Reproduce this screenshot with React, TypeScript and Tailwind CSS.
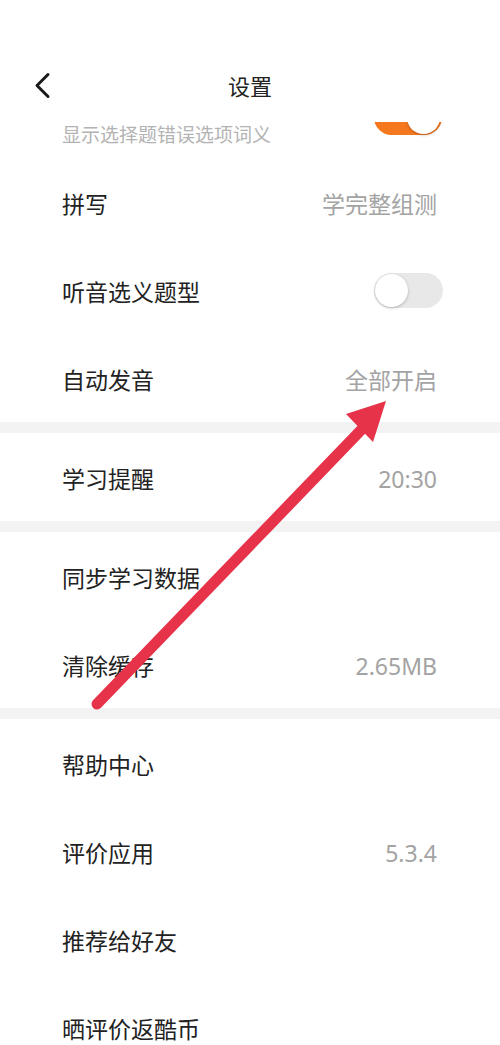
import React from "react";

const font = { fontFamily: '"Noto Sans", "Noto Sans CJK SC", sans-serif' };

type Row = { label: string; value?: string; toggle?: boolean };

const sections: Row[][] = [
  [
    { label: "拼写", value: "学完整组测" },
    { label: "听音选义题型", toggle: false },
    { label: "自动发音", value: "全部开启" },
  ],
  [{ label: "学习提醒", value: "20:30" }],
  [
    { label: "同步学习数据" },
    { label: "清除缓存", value: "2.65MB" },
  ],
  [
    { label: "帮助中心" },
    { label: "评价应用", value: "5.3.4" },
    { label: "推荐给好友" },
    { label: "晒评价返酷币" },
  ],
];

const Toggle = ({ on }: { on: boolean }) => (
  <div
    className={
      on
        ? "w-[68px] h-[35px] rounded-full bg-[#f5781e] flex items-center justify-end px-[2px] -mr-[5px]"
        : "w-[69px] h-[35px] rounded-full bg-[#e8e8e8] flex items-center justify-start px-[1px] -mr-[6px]"
    }
  >
    <div className="w-[33px] h-[33px] rounded-full bg-white shadow-[0_1px_3px_rgba(0,0,0,0.25)]" />
  </div>
);

const SettingRow = ({ row }: { row: Row }) => (
  <div className="h-[88px] flex items-center justify-between pl-[62px] pr-[63px]">
    <span className="text-[23px] text-[#222] mt-[5px]">{row.label}</span>
    {row.value && (
      <span className="text-[23px] text-[#a3a3a3] mt-[5px]">{row.value}</span>
    )}
    {row.toggle !== undefined && <Toggle on={row.toggle} />}
  </div>
);

export default function App() {
  return (
    <div className="relative w-[500px] h-[1045px] bg-white overflow-hidden" style={font}>
      {/* header */}
      <div className="relative z-10 h-[122px] bg-white pt-[68px]">
        <svg
          className="absolute left-[33px] top-[72px]"
          width="20"
          height="27"
          viewBox="0 0 20 27"
          fill="none"
          stroke="#1a1a1a"
          strokeWidth="3"
          strokeLinecap="round"
          strokeLinejoin="round"
        >
          <path d="M15 2.5 L4 13.5 L15 24.5" />
        </svg>
        <div className="w-full text-center text-[22px] text-[#222] leading-[36px]">
          设置
        </div>
      </div>

      {/* list */}
      <div className="h-[923px] overflow-hidden">
        <div className="h-[81px] -mt-[45px] flex items-center justify-between pl-[62px] pr-[63px]">
          <span className="mt-[35px] text-[19px] text-[#b3b3b3] leading-[20px]">
            显示选择题错误选项词义
          </span>
          <Toggle on={true} />
        </div>
        {sections.map((rows, i) => (
          <div key={i}>
            {i > 0 && <div className="h-[11px] bg-[#f3f3f3]" />}
            {rows.map((row) => (
              <SettingRow key={row.label} row={row} />
            ))}
          </div>
        ))}
      </div>

      {/* annotation arrow */}
      <svg
        className="absolute inset-0 pointer-events-none z-20"
        width="500"
        height="1045"
        viewBox="0 0 500 1045"
      >
        <line
          x1="97"
          y1="704"
          x2="364"
          y2="427"
          stroke="#e6334a"
          strokeWidth="11"
          strokeLinecap="round"
        />
        <polygon points="386,401 346,414 373,442" fill="#e6334a" />
      </svg>
    </div>
  );
}
